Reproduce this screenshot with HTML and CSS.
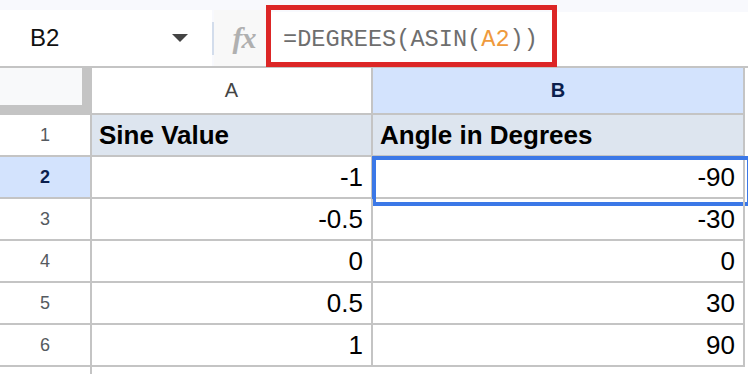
FILE: index.html
```html
<!DOCTYPE html>
<html>
<head>
<meta charset="utf-8">
<link rel="stylesheet" href="styles.css">
</head>
<body>
<div class="toolbar">
  <div class="namebox"><span class="cellref">B2</span><span class="caret"></span></div>
  <div class="sep"></div>
  <div class="fx">fx</div>
  <div class="formula"><span>=DEGREES(ASIN(</span><span class="arg">A2</span><span>))</span></div>
  <div class="highlight"></div>
</div>
<div class="sheet">
  <div class="corner"></div>
  <div class="colhead">A</div>
  <div class="colhead active">B</div>
  <div class="pad"></div>

  <div class="rowhead">1</div>
  <div class="cell title">Sine Value</div>
  <div class="cell title">Angle in Degrees</div>
  <div class="pad"></div>

  <div class="rowhead active">2</div>
  <div class="cell">-1</div>
  <div class="cell selected">-90</div>
  <div class="pad"></div>

  <div class="rowhead">3</div>
  <div class="cell">-0.5</div>
  <div class="cell">-30</div>
  <div class="pad"></div>

  <div class="rowhead">4</div>
  <div class="cell">0</div>
  <div class="cell">0</div>
  <div class="pad"></div>

  <div class="rowhead">5</div>
  <div class="cell">0.5</div>
  <div class="cell">30</div>
  <div class="pad"></div>

  <div class="rowhead">6</div>
  <div class="cell">1</div>
  <div class="cell">90</div>
  <div class="pad"></div>

  <div class="rowhead tail"></div>
  <div class="pad"></div>
  <div class="pad"></div>
  <div class="pad"></div>
</div>
</body>
</html>
```

FILE: styles.css
```css
* { box-sizing: border-box; }
html, body { margin: 0; padding: 0; background: #ffffff; }
body { width: 748px; height: 374px; overflow: hidden; font-family: "Liberation Sans", Arial, sans-serif; }

.toolbar {
  position: relative;
  display: flex;
  height: 66px;
  background: #f8f9fd;
}
.namebox {
  width: 212px;
  margin-top: 10px;
  background: #ffffff;
  display: flex;
  align-items: center;
  padding-left: 30px;
}
.cellref { font-size: 24px; color: #111111; }
.caret {
  margin-left: auto;
  margin-right: 24px;
  width: 0; height: 0;
  border-left: 8px solid transparent;
  border-right: 8px solid transparent;
  border-top: 8px solid #444444;
}
.sep {
  width: 2px;
  height: 33px;
  margin-top: 22px;
  background: #d3ddec;
}
.fx {
  width: 52px;
  margin-top: 10px;
  background: #f8f8f8;
  display: flex;
  align-items: center;
  justify-content: center;
  padding-left: 8px;
  font-family: "Liberation Serif", "DejaVu Serif", serif;
  font-style: italic;
  font-weight: bold;
  font-size: 30px;
  color: #b0b0b0;
  letter-spacing: -1px;
}
.formula {
  flex: 1;
  margin-top: 12px;
  background: #ffffff;
  display: flex;
  align-items: center;
  padding-left: 17px;
  font-family: "Liberation Mono", "DejaVu Sans Mono", monospace;
  font-size: 23.6px;
  color: #6e6e6e;
  white-space: pre;
}
.arg { color: #ef9a3c; }
.highlight {
  position: absolute;
  left: 266px;
  top: 5px;
  width: 291px;
  height: 62px;
  border: 5px solid #dc2626;
}

.sheet {
  display: grid;
  grid-template-columns: 92px 281px 372px 3px;
  grid-template-rows: 47px repeat(6, 42px) 7px;
  border-top: 2px solid #c4c4c4;
}
.corner {
  background: #f8f9fa;
  border-right: 10px solid #c4c4c4;
  border-bottom: 10px solid #c4c4c4;
}
.colhead {
  display: flex;
  align-items: center;
  justify-content: center;
  background: #ffffff;
  border-right: 2px solid #c4c4c4;
  border-bottom: 2px solid #c4c4c4;
  font-size: 20px;
  color: #444444;
}
.colhead.active, .rowhead.active {
  background: #d3e3fd;
  color: #0b1f4d;
  font-weight: bold;
}
.rowhead {
  display: flex;
  align-items: center;
  justify-content: center;
  background: #ffffff;
  border-right: 2px solid #c4c4c4;
  border-bottom: 2px solid #c4c4c4;
  font-size: 18px;
  color: #555a60;
}
.rowhead.tail { border-bottom: none; }
.cell {
  position: relative;
  display: flex;
  align-items: center;
  justify-content: flex-end;
  padding: 0 8px 0 7px;
  border-right: 2px solid #c4c4c4;
  border-bottom: 2px solid #c4c4c4;
  font-size: 26px;
  color: #000000;
}
.cell.title {
  justify-content: flex-start;
  background: #dde5ef;
  font-weight: bold;
}
.cell.selected::after {
  content: "";
  position: absolute;
  left: -1px;
  top: -1px;
  width: 371px;
  height: 42px;
  border: 4px solid #3b78e7;
}
.pad { background: #ffffff; }
```
